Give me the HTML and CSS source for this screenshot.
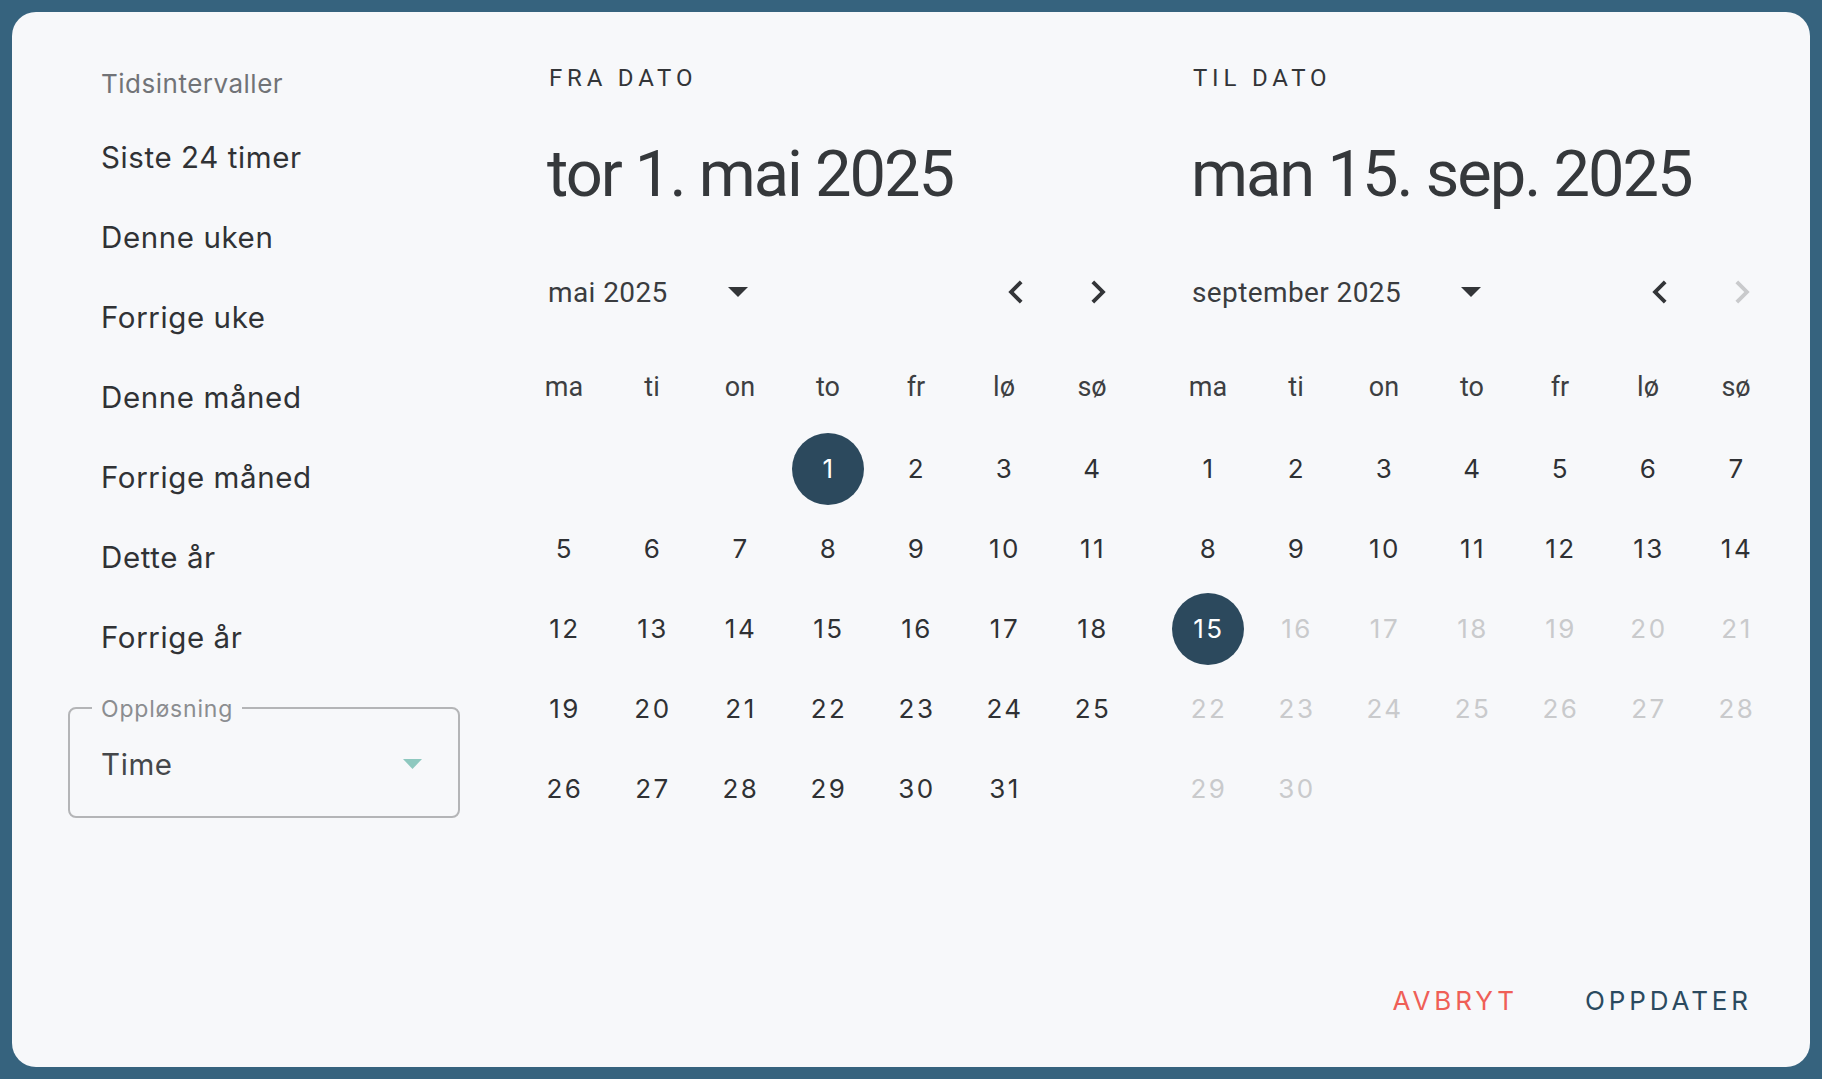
FILE: index.html
```html
<!DOCTYPE html>
<html lang="no">
<head>
<meta charset="utf-8">
<title>Velg periode</title>
<link rel="stylesheet" href="styles.css">
</head>
<body>
<div class="dialog">
  <div class="main">
    <aside class="sidebar">
      <div class="sidebar-title">Tidsintervaller</div>
      <ul class="ranges">
        <li>Siste 24 timer</li>
        <li>Denne uken</li>
        <li>Forrige uke</li>
        <li>Denne måned</li>
        <li>Forrige måned</li>
        <li>Dette år</li>
        <li>Forrige år</li>
      </ul>
      <div class="select">
        <span class="select-label">Oppløsning</span>
        <span class="select-value">Time</span>
        <svg class="select-arrow" width="19" height="10" viewBox="0 0 19 10"><path d="M0 0h19L9.5 10z"/></svg>
      </div>
    </aside>

    <section class="calendar">
      <div class="cal-overline">FRA DATO</div>
      <div class="cal-date">tor 1. mai 2025</div>
      <div class="cal-month">
        <span class="month-label">mai 2025</span>
        <svg class="month-drop" width="20" height="10" viewBox="0 0 20 10"><path d="M0 0h20L10 10z"/></svg>
        <div class="nav">
          <button class="nav-btn"><svg width="46" height="46" viewBox="0 0 24 24"><path d="M15.41 16.59L10.83 12l4.58-4.59L14 6l-6 6 6 6 1.41-1.41z"/></svg></button>
          <button class="nav-btn"><svg width="46" height="46" viewBox="0 0 24 24"><path d="M8.59 16.59L13.17 12 8.59 7.41 10 6l6 6-6 6-1.41-1.41z"/></svg></button>
        </div>
      </div>
      <div class="grid weekdays"><span>ma</span><span>ti</span><span>on</span><span>to</span><span>fr</span><span>lø</span><span>sø</span></div>
      <div class="grid days">
        <span></span><span></span><span></span>
        <span class="day sel">1</span><span class="day">2</span><span class="day">3</span><span class="day">4</span>
        <span class="day">5</span><span class="day">6</span><span class="day">7</span><span class="day">8</span><span class="day">9</span><span class="day">10</span><span class="day">11</span>
        <span class="day">12</span><span class="day">13</span><span class="day">14</span><span class="day">15</span><span class="day">16</span><span class="day">17</span><span class="day">18</span>
        <span class="day">19</span><span class="day">20</span><span class="day">21</span><span class="day">22</span><span class="day">23</span><span class="day">24</span><span class="day">25</span>
        <span class="day">26</span><span class="day">27</span><span class="day">28</span><span class="day">29</span><span class="day">30</span><span class="day">31</span>
      </div>
    </section>

    <section class="calendar">
      <div class="cal-overline">TIL DATO</div>
      <div class="cal-date">man 15. sep. 2025</div>
      <div class="cal-month">
        <span class="month-label">september 2025</span>
        <svg class="month-drop" width="20" height="10" viewBox="0 0 20 10"><path d="M0 0h20L10 10z"/></svg>
        <div class="nav">
          <button class="nav-btn"><svg width="46" height="46" viewBox="0 0 24 24"><path d="M15.41 16.59L10.83 12l4.58-4.59L14 6l-6 6 6 6 1.41-1.41z"/></svg></button>
          <button class="nav-btn disabled"><svg width="46" height="46" viewBox="0 0 24 24"><path d="M8.59 16.59L13.17 12 8.59 7.41 10 6l6 6-6 6-1.41-1.41z"/></svg></button>
        </div>
      </div>
      <div class="grid weekdays"><span>ma</span><span>ti</span><span>on</span><span>to</span><span>fr</span><span>lø</span><span>sø</span></div>
      <div class="grid days">
        <span class="day">1</span><span class="day">2</span><span class="day">3</span><span class="day">4</span><span class="day">5</span><span class="day">6</span><span class="day">7</span>
        <span class="day">8</span><span class="day">9</span><span class="day">10</span><span class="day">11</span><span class="day">12</span><span class="day">13</span><span class="day">14</span>
        <span class="day sel">15</span><span class="day off">16</span><span class="day off">17</span><span class="day off">18</span><span class="day off">19</span><span class="day off">20</span><span class="day off">21</span>
        <span class="day off">22</span><span class="day off">23</span><span class="day off">24</span><span class="day off">25</span><span class="day off">26</span><span class="day off">27</span><span class="day off">28</span>
        <span class="day off">29</span><span class="day off">30</span>
      </div>
    </section>
  </div>

  <div class="actions">
    <button class="btn cancel">AVBRYT</button>
    <button class="btn ok">OPPDATER</button>
  </div>
</div>
</body>
</html>
```

FILE: styles.css
```css
html, body {
  height: 100%;
}

body {
  margin: 0;
  padding: 12px;
  box-sizing: border-box;
  background: #36637e;
  font-family: Inter, "Noto Sans", sans-serif;
  color: #323437;
}

.dialog {
  height: 100%;
  box-sizing: border-box;
  background: #f7f8fa;
  border-radius: 24px;
  padding: 44px 30px 46px 56px;
  display: flex;
  flex-direction: column;
}

.main {
  display: flex;
  align-items: flex-start;
}

/* Sidebar */
.sidebar {
  width: 392px;
  margin-right: 60px;
  flex: none;
}

.sidebar-title {
  padding-left: 33px;
  font-size: 26px;
  line-height: 55px;
  color: #717377;
  margin-bottom: 6px;
  letter-spacing: 0.5px;
}

.ranges {
  list-style: none;
  margin: 0;
  padding: 0;
}

.ranges li {
  padding-left: 33px;
  font-size: 29.5px;
  line-height: 80px;
  letter-spacing: 0.6px;
  color: #303235;
}

.select {
  position: relative;
  margin-top: 30px;
  height: 111px;
  box-sizing: border-box;
  border: 2px solid #b4b5b7;
  border-radius: 8px;
  display: flex;
  align-items: center;
  padding: 2px 36px 0 31px;
}

.select-label {
  position: absolute;
  top: -12px;
  left: 22px;
  padding: 0 9px;
  background: #f7f8fa;
  font-size: 23px;
  line-height: 24px;
  color: #8b8d90;
  letter-spacing: 0.8px;
}

.select-value {
  flex: 1;
  font-size: 29.5px;
  letter-spacing: 0.6px;
  color: #45474a;
}

.select-arrow {
  fill: #8ec8bf;
}

/* Calendars */
.calendar {
  width: 616px;
  flex: none;
  font-family: Roboto, "Liberation Sans", sans-serif;
  color: #35383b;
}

.calendar + .calendar {
  margin-left: 28px;
}

.cal-overline {
  padding-left: 29px;
  font-size: 24px;
  line-height: 45px;
  letter-spacing: 0.2em;
  color: #333538;
}

.cal-date {
  margin-top: 33px;
  padding-left: 27px;
  font-size: 65px;
  line-height: 80px;
  letter-spacing: -2px;
  white-space: nowrap;
}

.cal-month {
  margin-top: 50px;
  height: 56px;
  display: flex;
  align-items: center;
  padding-left: 28px;
}

.month-label {
  font-size: 28px;
  letter-spacing: 0.4px;
  color: #3a3c3f;
}

.month-drop {
  margin-left: 60px;
  fill: #333538;
}

.nav {
  margin-left: auto;
  padding-right: 14px;
  display: flex;
  gap: 34px;
}

.nav-btn {
  width: 48px;
  height: 48px;
  padding: 0;
  border: none;
  background: none;
  display: flex;
  align-items: center;
  justify-content: center;
  fill: #333538;
}

.nav-btn.disabled {
  fill: #c9cacc;
}

.grid {
  display: grid;
  grid-template-columns: repeat(7, 88px);
  grid-auto-rows: 80px;
}

.weekdays {
  margin-top: 27px;
  font-size: 27px;
  color: #3d3f42;
}

.weekdays span {
  display: flex;
  align-items: center;
  justify-content: center;
}

.days {
  font-family: Inter, "Noto Sans", sans-serif;
  font-size: 26px;
  letter-spacing: 2.5px;
  color: #2f3134;
}

.day {
  width: 72px;
  height: 72px;
  justify-self: center;
  align-self: center;
  border-radius: 50%;
  display: flex;
  align-items: center;
  justify-content: center;
  padding-left: 2px;
  box-sizing: border-box;
  margin-top: 3px;
}

.day.sel {
  background: #2c495d;
  color: #ffffff;
}

.day.off {
  color: #c9cacc;
}

/* Actions */
.actions {
  margin-top: auto;
  display: flex;
  justify-content: flex-end;
  gap: 67px;
  padding-right: 28px;
}

.btn {
  border: none;
  background: none;
  padding: 0;
  font-family: Inter, "Noto Sans", sans-serif;
  font-size: 26px;
  line-height: 40px;
  letter-spacing: 0.15em;
}

.btn.cancel {
  color: #ef5f57;
}

.btn.ok {
  color: #2b4a5f;
}
```
